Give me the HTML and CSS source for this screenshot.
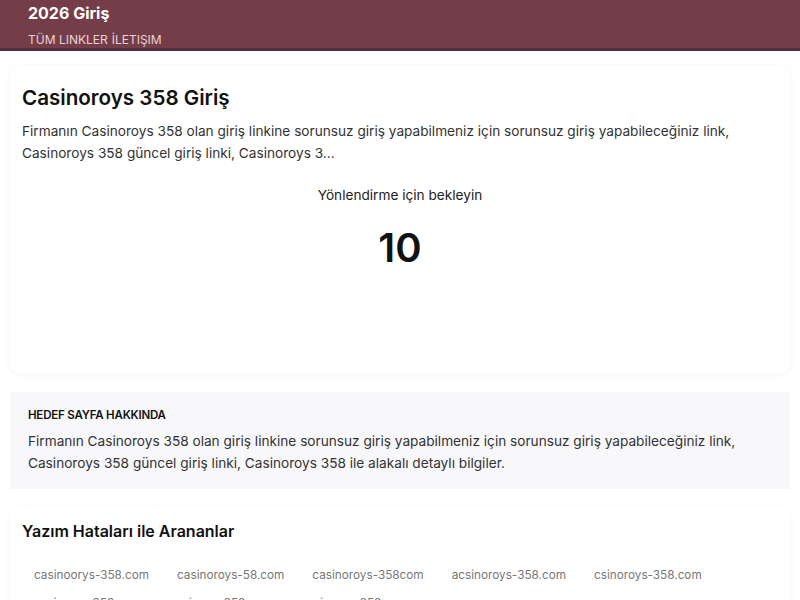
FILE: index.html
```html
<!DOCTYPE html>
<html lang="tr">
<head>
    <meta charset="UTF-8">
    <meta name="viewport" content="width=device-width, initial-scale=1.0">
    <title>Casinoroys 358 Giriş</title>
    <link rel="stylesheet" href="styles.css">
</head>
<body>

    <header class="site-header">
        <div class="brand">2026 Giriş</div>
        <nav class="nav">
            <a href="#">TÜM LINKLER</a>
            <a href="#">İLETIŞIM</a>
        </nav>
    </header>

    <main class="page">
        <section class="card redirect">
            <h1>Casinoroys 358 Giriş</h1>
            <p class="summary">Firmanın Casinoroys 358 olan giriş linkine sorunsuz giriş yapabilmeniz için sorunsuz giriş yapabileceğiniz link, Casinoroys 358 güncel giriş linki, Casinoroys 3...</p>
            <div class="wait">Yönlendirme için bekleyin</div>
            <div class="counter" id="counter">10</div>
        </section>

        <section class="card about">
            <h2>HEDEF SAYFA HAKKINDA</h2>
            <p>Firmanın Casinoroys 358 olan giriş linkine sorunsuz giriş yapabilmeniz için sorunsuz giriş yapabileceğiniz link, Casinoroys 358 güncel giriş linki, Casinoroys 358 ile alakalı detaylı bilgiler.</p>
        </section>

        <section class="card typos">
            <h3>Yazım Hataları ile Arananlar</h3>
            <div class="tags">
                <span class="tag">casinoorys-358.com</span>
                <span class="tag">casinoroys-58.com</span>
                <span class="tag">casinoroys-358com</span>
                <span class="tag">acsinoroys-358.com</span>
                <span class="tag">csinoroys-358.com</span>
                <span class="tag">casinroys-358.com</span>
                <span class="tag">casinoys-358.com</span>
                <span class="tag">casinorys-358.com</span>
            </div>
        </section>
    </main>

</body>
</html>
```

FILE: styles.css
```css
body {
    margin: 0;
    font-family: 'Inter', 'Noto Sans', sans-serif;
    background: #fff;
    color: #222;
}

.site-header {
    background: #743d48;
    border-bottom: 3px solid #4f2d45;
    padding: 0 28px;
    height: 48px;
}

.brand {
    color: #fff;
    font-size: 16px;
    font-weight: 700;
    line-height: 26px;
}

.nav {
    display: flex;
    gap: 4px;
    line-height: 26px;
    padding-top: 1px;
}

.nav a {
    color: #ecd3da;
    font-size: 12px;
    text-decoration: none;
}

.page {
    padding: 15px 10px;
}

.card {
    border-radius: 12px;
    margin-bottom: 18px;
}

.redirect {
    background: #fff;
    box-shadow: 0 1px 6px rgba(0, 0, 0, 0.06);
    padding: 18px 12px 102px;
}

.redirect h1 {
    margin: 0;
    font-size: 20.6px;
    font-weight: 600;
    line-height: 28px;
    color: #111;
}

.summary {
    margin: 8px 0 0;
    font-size: 13.65px;
    line-height: 22px;
    color: #333;
}

.wait {
    margin-top: 20px;
    text-align: center;
    font-size: 13.65px;
    line-height: 22px;
    color: #222;
}

.counter {
    margin-top: 18px;
    text-align: center;
    font-size: 40px;
    font-weight: 600;
    line-height: 48px;
    color: #111;
}

.about {
    background: #f8f8fb;
    border-radius: 0;
    padding: 15px 18px;
}

.about h2 {
    margin: 0;
    font-size: 11.5px;
    font-weight: 600;
    line-height: 16px;
    color: #111;
    letter-spacing: -0.2px;
}

.about p {
    margin: 7px 0 0;
    font-size: 13.65px;
    line-height: 22px;
    color: #333;
}

.typos {
    background: #fff;
    box-shadow: 0 1px 6px rgba(0, 0, 0, 0.05);
    padding: 12px 12px 16px;
}

.typos h3 {
    margin: 0;
    font-size: 16px;
    font-weight: 600;
    line-height: 24px;
    color: #111;
}

.tags {
    display: flex;
    flex-wrap: wrap;
    gap: 4px 4px;
    margin-top: 20px;
}

.tag {
    padding: 2px 12px;
    font-size: 11.75px;
    line-height: 20px;
    color: #777;
}
```
